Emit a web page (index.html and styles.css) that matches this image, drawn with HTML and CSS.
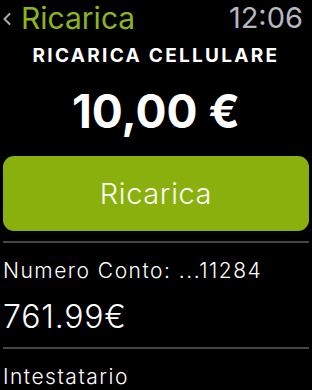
FILE: index.html
```html
<!DOCTYPE html>
<html>
<head>
<meta charset="utf-8">
<link rel="stylesheet" href="styles.css">
</head>
<body>
<div class="screen">
  <header class="topbar">
    <div class="back">
      <svg class="chev" width="8" height="12" viewBox="0 0 8 12"><polyline points="6.5,1 1.5,6 6.5,11" fill="none" stroke="#a9abb0" stroke-width="2" stroke-linecap="round" stroke-linejoin="round"/></svg>
      <span class="back-label">Ricarica</span>
    </div>
    <span class="time">12:06</span>
  </header>
  <h1 class="title">RICARICA CELLULARE</h1>
  <div class="amount">10,00 €</div>
  <button class="cta">Ricarica</button>
  <hr class="sep">
  <div class="label">Numero Conto: ...11284</div>
  <div class="balance">761.99€</div>
  <hr class="sep">
  <div class="label">Intestatario</div>
</div>
</body>
</html>
```
FILE: styles.css
```css
html, body {
  margin: 0;
  padding: 0;
  background: #000;
}
body {
  width: 312px;
  height: 390px;
  overflow: hidden;
  font-family: Inter, "Noto Sans", sans-serif;
  color: #fff;
}
.screen {
  display: flex;
  flex-direction: column;
  padding: 0 3px;
}
.topbar {
  display: flex;
  justify-content: space-between;
  align-items: center;
  height: 36px;
}
.back {
  display: flex;
  align-items: center;
  gap: 10px;
}
.chev {
  display: block;
  margin-top: 1px;
}
.back-label {
  color: #8db51a;
  font-size: 30px;
  font-weight: 400;
  line-height: 36px;
}
.time {
  color: #b6b9c0;
  font-size: 29px;
  font-weight: 400;
  line-height: 36px;
  margin-right: 6px;
}
.title {
  margin: 5px 0 0;
  text-align: center;
  font-size: 19px;
  font-weight: 700;
  letter-spacing: 2.3px;
  line-height: 30px;
}
.amount {
  text-align: center;
  font-size: 46px;
  font-weight: 700;
  line-height: 56px;
  margin-top: 12px;
}
.cta {
  margin: 17px 0 0;
  height: 75px;
  border: none;
  border-radius: 11px;
  background: #8ab00e;
  color: #fafcf4;
  font-family: inherit;
  font-size: 29px;
  font-weight: 300;
  letter-spacing: 0.6px;
  padding: 0;
}
.sep {
  margin: 10px 0 0;
  border: none;
  height: 2px;
  background: #454545;
}
.label {
  font-size: 21px;
  font-weight: 300;
  letter-spacing: 1.5px;
  line-height: 30px;
  margin-top: 13px;
}
.balance {
  font-size: 32px;
  font-weight: 300;
  letter-spacing: 0.8px;
  line-height: 40px;
  margin-top: 11px;
}
```
